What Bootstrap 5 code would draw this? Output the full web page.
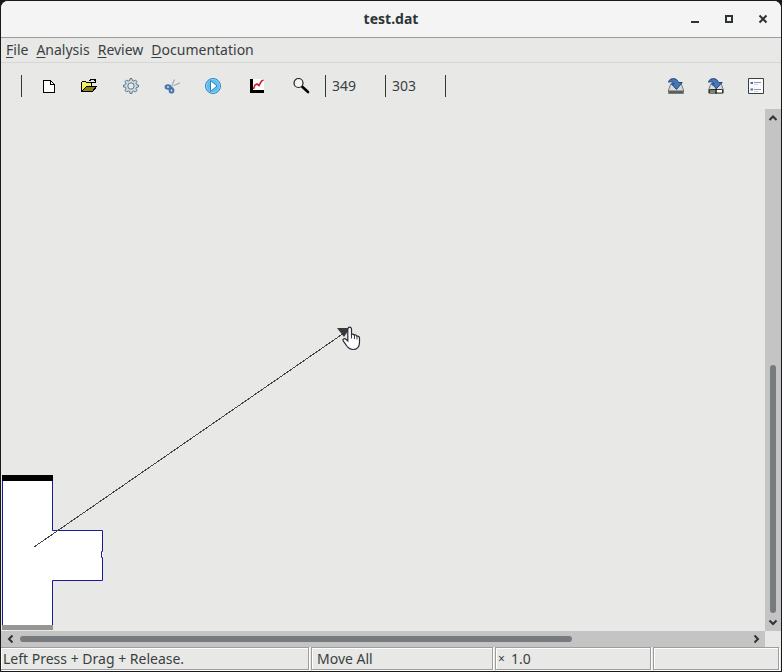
<!DOCTYPE html>
<html lang="en">
<head>
<meta charset="utf-8">
<meta name="viewport" content="width=device-width, initial-scale=1">
<title>test.dat</title>
<link href="https://cdn.jsdelivr.net/npm/bootstrap@5.3.0/dist/css/bootstrap.min.css" rel="stylesheet">
<style>
body { background: #1a181d; color: #3a3f41; font: 14px/20px "Noto Sans", "Open Sans", sans-serif; }
button { color: inherit; }
.win { background: #e8e8e7; border: 1px solid #1a181d; border-radius: 8px 8px 0 0; }
.titlebar { height: 37px; background: #f4f4f4; border-bottom: 1px solid #9b9b9a; }
.titlebar h1 { font-size: 14px; line-height: 20px; color: #2e3436; }
.side { width: 110px; padding-right: 1px; }
.winbtn { width: 34px; height: 34px; color: #2e3436; }
.menubar { height: 25px; border-bottom: 1px solid #d6d6d5; padding-left: 5px; gap: 8px; }
.menubar a { color: inherit; }
.menubar u { text-underline-offset: 2px; }
.toolbar { height: 46px; padding: 0 5px 0 20px; }
.rule { width: 1px; height: 22px; background: #33383a; }
.lead-rule { margin-right: 7px; }
.tool { width: 40px; height: 32px; }
.tool-gear { width: 44px; }
.tool-plot { width: 48px; }
.tool-find { margin-right: 4px; }
.readout { width: 59px; padding-left: 6px; }
.stage { min-width: 0; min-height: 0; }
.vbar { width: 16px; background: #c4c4c4; }
.hbar { height: 16px; background: #c4c4c4; }
.corner { width: 16px; }
.vbar button { width: 16px; height: 18px; }
.hbar button { width: 19px; height: 16px; }
.vthumb { width: 6px; border-radius: 3px; background: #777b7d; }
.hthumb { height: 6px; border-radius: 3px; background: #777b7d; }
.statusbar { height: 24px; gap: 2px; padding: 0 2px 1px 0; }
.pane { border: 1px solid #9d9d9c; box-shadow: inset 1px 1px #fff, 1px 1px #fff; padding-left: 5px; line-height: 21px; min-width: 0; }
.pane-hint { width: 308px; padding-left: 2px; border-left: 0; }
.pane-mode { width: 182px; }
.pane-zoom { width: 156px; padding-left: 2px; gap: 6px; }
.times { font-size: 12px; }
</style>
<script defer src="https://cdn.jsdelivr.net/npm/bootstrap@5.3.0/dist/js/bootstrap.bundle.min.js"></script>
</head>
<body>
<div class="win vh-100 d-flex flex-column overflow-hidden">
  <header class="titlebar d-flex align-items-center flex-shrink-0">
    <div class="side"></div>
    <h1 class="flex-grow-1 text-center fw-bold m-0">test.dat</h1>
    <div class="side d-flex justify-content-end">
      <button class="winbtn btn p-0 border-0 d-flex align-items-center justify-content-center" aria-label="Minimize"><svg width="10" height="10"><path d="M1 8h8" stroke="currentColor" stroke-width="2"/></svg></button>
      <button class="winbtn btn p-0 border-0 d-flex align-items-center justify-content-center" aria-label="Maximize"><svg width="10" height="10"><path d="M2 2h6v6H2z" fill="none" stroke="currentColor" stroke-width="2"/></svg></button>
      <button class="winbtn btn p-0 border-0 d-flex align-items-center justify-content-center" aria-label="Close"><svg width="10" height="10"><path d="M1.500 1.500l7 7M8.500 1.500l-7 7" stroke="currentColor" stroke-width="2"/></svg></button>
    </div>
  </header>

  <nav class="menubar d-flex align-items-center flex-shrink-0" aria-label="Main menu">
    <a class="text-decoration-none" href="#file"><u>F</u>ile</a>
    <a class="text-decoration-none" href="#analysis"><u>A</u>nalysis</a>
    <a class="text-decoration-none" href="#review"><u>R</u>eview</a>
    <a class="text-decoration-none" href="#documentation"><u>D</u>ocumentation</a>
  </nav>

  <div class="toolbar d-flex align-items-center flex-shrink-0" role="toolbar" aria-label="Tools">
    <span class="rule lead-rule"></span>
    <button class="tool btn p-0 border-0 d-flex align-items-center justify-content-center" aria-label="New">
      <svg width="16" height="16" viewBox="0 0 16 16" shape-rendering="crispEdges"><path d="M2.500 2.500h7l4 4v8h-11z" fill="#fff" stroke="#000"/><path d="M9.500 2.500v4h4" fill="none" stroke="#000"/></svg>
    </button>
    <button class="tool btn p-0 border-0 d-flex align-items-center justify-content-center" aria-label="Open">
      <svg width="18" height="16" viewBox="0 0 18 16" shape-rendering="crispEdges"><path d="M1.500 13.500v-9l1-1h3l1 1h5v4h-5z" fill="#f4f060" stroke="#000"/><path d="M1.500 13.500l5-5h10l-4 5z" fill="#85831a" stroke="#000"/><path d="M9 2.500h1v-1h4v1h1v2M12 4.500h4M15.500 1v4" fill="none" stroke="#000"/></svg>
    </button>
    <button class="tool tool-gear btn p-0 border-0 d-flex align-items-center justify-content-center" aria-label="Settings">
      <svg width="16" height="16" viewBox="0 0 16 16" fill="none" stroke="#587488"><path d="M6.700 2.500L7 .6h2l.3 1.900 1.600.6 1.600-1.100 1.500 1.500-1.100 1.600.6 1.600 1.900.3v2l-1.900.3-.6 1.600 1.100 1.600-1.500 1.500-1.600-1.100-1.600.6L9 15.400H7l-.3-1.900-1.600-.6L3.500 14 2 12.500l1.100-1.600-.6-1.600L.6 9V7l1.900-.3.6-1.600L2 3.500 3.500 2l1.600 1.100z" fill="#d3dde4"/><circle cx="8" cy="8" r="3.200" fill="#e8e8e7"/></svg>
    </button>
    <button class="tool btn p-0 border-0 d-flex align-items-center justify-content-center" aria-label="Cut">
      <svg width="18" height="16" viewBox="0 0 18 16" fill="none"><path d="M7.500 9.500L10.500 1.500M7 9l9-4" stroke="#a9b1b4" stroke-width="1.500"/><path d="M8 9.500l8.500-3.500M8.500 9l3-6" stroke="#f2f4f4" stroke-width=".7"/><ellipse cx="4" cy="9" rx="2.400" ry="1.800" stroke="#4674ae" stroke-width="2"/><ellipse cx="7.500" cy="12.500" rx="1.900" ry="2.100" stroke="#4674ae" stroke-width="2"/><path d="M6 9.500l3 1" stroke="#4674ae" stroke-width="2"/></svg>
    </button>
    <button class="tool btn p-0 border-0 d-flex align-items-center justify-content-center" aria-label="Run">
      <svg width="18" height="18" viewBox="0 0 18 18"><circle cx="9" cy="9" r="7.500" fill="#5bbdf0" stroke="#2b83bd"/><circle cx="9" cy="9" r="6.500" fill="none" stroke="#8bd2f7"/><path d="M6.500 3.500v11L13 9z" fill="#fff" stroke="#2c83b9"/></svg>
    </button>
    <button class="tool tool-plot btn p-0 border-0 d-flex align-items-center justify-content-center" aria-label="Plot">
      <svg width="16" height="16" viewBox="0 0 16 16"><path d="M1 1h14v14H1z" fill="#fff"/><path d="M1 1h3v11h11v3H1z" fill="#000"/><path d="M4.500 11l1.500-4 2-1 2 1.500L12.500 3l2-1" fill="none" stroke="#c4272b" stroke-width="1.600"/></svg>
    </button>
    <button class="tool tool-find btn p-0 border-0 d-flex align-items-center justify-content-center" aria-label="Zoom">
      <svg width="18" height="18" viewBox="0 0 18 18"><path d="M10 9.500l6 5.500" stroke="#000" stroke-width="2.600" stroke-linecap="round"/><circle cx="6.500" cy="6" r="4.500" fill="#f5f5f5" stroke="#1d1d1d" stroke-width="1.200"/></svg>
    </button>
    <span class="rule"></span><output class="readout" aria-label="X">349</output>
    <span class="rule"></span><output class="readout" aria-label="Y">303</output>
    <span class="rule"></span>
    <button class="tool btn p-0 border-0 ms-auto d-flex align-items-center justify-content-center" aria-label="Save">
      <svg width="16" height="16" viewBox="0 0 16 16"><path d="M3 5.500h10l2.500 6.500v3.500H.5V12z" fill="#dadcda" stroke="#747a78"/><path d="M1 12.500h14v2.500H1z" fill="#59605d"/><path d="M.6 4.200C1.200 0 7 -.3 9.200 2.200L10.500 4.500H14.200L8.500 11.500 3.500 6h2.700C5.500 3.800 3 3.200 .6 4.200z" fill="#4779b8" stroke="#1f467f"/></svg>
    </button>
    <button class="tool btn p-0 border-0 d-flex align-items-center justify-content-center" aria-label="Save as">
      <svg width="16" height="16" viewBox="0 0 16 16"><path d="M3 5.500h10l2.500 6.500v3H.5v-3z" fill="#dadcda" stroke="#747a78"/><path d="M1.500 11.500h13v3.500h-13z" fill="#fff" stroke="#333"/><path d="M2 12h5v2.500H2z" fill="#70866a"/><path d="M.6 4.200C1.200 0 7 -.3 9.200 2.200L10.500 4.500H14.200L8.500 10.500 3.500 6h2.700C5.500 3.800 3 3.200 .6 4.200z" fill="#4779b8" stroke="#1f467f"/><path d="M8 10.500v5" stroke="#111" stroke-width="1.500"/></svg>
    </button>
    <button class="tool btn p-0 border-0 d-flex align-items-center justify-content-center" aria-label="Options">
      <svg width="16" height="16" viewBox="0 0 16 16"><path d="M.5 .5h15v15H.5z" fill="#fcfcfc" stroke="#3b3f42"/><path d="M2.500 5h2.500M2.500 11.500h2.500" stroke="#4e68b0" stroke-width="2"/><path d="M6 4.500h7M6 11.500h7" stroke="#8796bd"/><path d="M6 6.500h4M6 13.500h4" stroke="#ccd2e2"/></svg>
    </button>
  </div>

  <main class="stage d-flex flex-grow-1">
    <svg class="flex-grow-1 h-100 w-100" role="img" aria-label="Model canvas">
      <path d="M1 370H52V421H102V472H52V516H1z" fill="#fff"/>
      <path d="M1.500 372V516M51.500 372V421.500H101.500V442.500H100.500V448.500H101.500V471.500H51.500V516" fill="none" stroke="#1a1a9c"/>
      <path d="M1 366h51v6H1z" fill="#000"/>
      <path d="M1 516h51v5H1z" fill="#969696"/>
      <path d="M33 438L343 224" stroke="#444" shape-rendering="crispEdges"/>
      <path d="M336 219h13l-6 9z" fill="#3a3a3c"/>
      <path d="M347.500 218.500c1.200-.8 3 0 3 1.600v5.400c.8-.8 2.600-.5 2.800.8.800-.7 2.500-.3 2.700 1 1.200-.5 2.500.3 2.500 1.600v4.600c0 4-2.400 7-6.500 7-3 0-4.300-1-5.800-3l-4-5.600c-1-1.500 1-3 2.400-1.900l2.200 2v-12z" fill="#fff" stroke="#262a31" stroke-width="1.200"/>
      <path d="M350.500 225v4.500M353.500 226v4M356 227.500v3" stroke="#262a31" stroke-width=".9"/>
    </svg>
    <div class="vbar d-flex flex-column align-items-center flex-shrink-0">
      <button class="btn p-0 border-0 d-flex align-items-center justify-content-center rounded-0" aria-label="Scroll up"><svg width="10" height="10"><path d="M1.500 7L5 3.500 8.500 7" fill="none" stroke="#2e3436" stroke-width="2"/></svg></button>
      <div class="flex-grow-1 d-flex flex-column justify-content-end"><div class="vthumb" style="height:51%"></div></div>
      <button class="btn p-0 border-0 d-flex align-items-center justify-content-center rounded-0" aria-label="Scroll down"><svg width="10" height="10"><path d="M1.500 3.500L5 7 8.500 3.500" fill="none" stroke="#2e3436" stroke-width="2"/></svg></button>
    </div>
  </main>

  <div class="d-flex flex-shrink-0">
    <div class="hbar d-flex align-items-center flex-grow-1">
      <button class="btn p-0 border-0 d-flex align-items-center justify-content-center rounded-0" aria-label="Scroll left"><svg width="10" height="10"><path d="M6.500 1.500L3 5l3.500 3.500" fill="none" stroke="#2e3436" stroke-width="2"/></svg></button>
      <div class="flex-grow-1"><div class="hthumb" style="width:76%"></div></div>
      <button class="btn p-0 border-0 d-flex align-items-center justify-content-center rounded-0" aria-label="Scroll right"><svg width="10" height="10"><path d="M3.500 1.500L7 5 3.500 8.500" fill="none" stroke="#2e3436" stroke-width="2"/></svg></button>
    </div>
    <div class="corner"></div>
  </div>

  <footer class="statusbar d-flex flex-shrink-0">
    <div class="pane pane-hint text-nowrap">Left Press + Drag + Release.</div>
    <div class="pane pane-mode">Move All</div>
    <div class="pane pane-zoom d-flex"><span class="times">×</span><span>1.0</span></div>
    <div class="pane flex-grow-1"></div>
  </footer>
</div>
</body>
</html>
